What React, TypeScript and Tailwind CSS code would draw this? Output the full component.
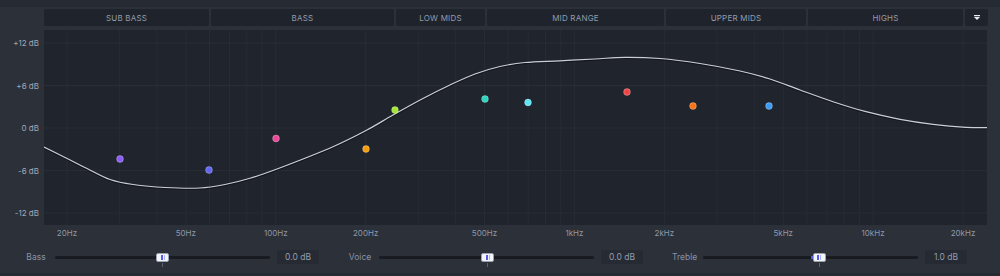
import type { ReactNode } from 'react';

const GX = 44;
const GY = 30;
const GW = 943;
const GH = 195;

const fx = (f: number) => 67 + Math.log10(f / 20) * 298.67 - GX;
const dy = (db: number) => 128 - db * 7.083 - GY;

const bands = [
  { label: 'SUB BASS', cls: 'w-[165px]' },
  { label: 'BASS', cls: 'w-[183px]' },
  { label: 'LOW MIDS', cls: 'w-[89px]' },
  { label: 'MID RANGE', cls: 'w-[177px]' },
  { label: 'UPPER MIDS', cls: 'w-[140px]' },
  { label: 'HIGHS', cls: 'w-[155px]' },
];

const gridFreqs = [
  20, 30, 40, 50, 60, 70, 80, 90, 100, 200, 300, 400, 500, 600, 700, 800, 900, 1000, 2000, 3000, 4000,
  5000, 6000, 7000, 8000, 9000, 10000, 20000,
];
const gridDb = [12, 6, 0, -6, -12];

const freqLabels: [string, number][] = [
  ['20Hz', 20],
  ['50Hz', 50],
  ['100Hz', 100],
  ['200Hz', 200],
  ['500Hz', 500],
  ['1kHz', 1000],
  ['2kHz', 2000],
  ['5kHz', 5000],
  ['10kHz', 10000],
  ['20kHz', 20000],
];

// absolute page coords traced from the response curve
const curve: [number, number][] = [
  [44, 147], [66, 158], [87, 168.5], [110, 179.5], [133, 184.5], [165, 187.5], [200, 188], [225, 184.5],
  [250, 178.3], [283, 166.7], [333, 146.7], [367, 130], [393, 115], [423, 98.5], [450, 85], [475, 74],
  [500, 66.5], [525, 62.5], [560, 60.8], [595, 59], [625, 57.3], [660, 58.5], [700, 63.5], [740, 71],
  [770, 79], [800, 90], [833, 101.7], [866, 111.7], [900, 119.3], [933, 124.3], [966, 127.3], [987, 127.7],
];

const dots: { x: number; y: number; c: string }[] = [
  { x: 120, y: 159, c: '#8b5cf6' },
  { x: 209, y: 170, c: '#6366f1' },
  { x: 276, y: 138.5, c: '#ec4899' },
  { x: 366, y: 149, c: '#f59e0b' },
  { x: 395, y: 110, c: '#a3e635' },
  { x: 485, y: 99, c: '#2dd4bf' },
  { x: 528, y: 102.5, c: '#5ee6f5' },
  { x: 627, y: 92, c: '#ef4444' },
  { x: 693, y: 106, c: '#f97316' },
  { x: 769, y: 106, c: '#3b9cf6' },
];

function smoothPath(pts: [number, number][]) {
  const p = pts.map(([x, y]) => [x - GX, y - GY]);
  let d = `M ${p[0][0]} ${p[0][1]}`;
  for (let i = 0; i < p.length - 1; i++) {
    const p0 = p[i - 1] ?? p[i];
    const p1 = p[i];
    const p2 = p[i + 1];
    const p3 = p[i + 2] ?? p2;
    const c1x = p1[0] + (p2[0] - p0[0]) / 6;
    const c1y = p1[1] + (p2[1] - p0[1]) / 6;
    const c2x = p2[0] - (p3[0] - p1[0]) / 6;
    const c2y = p2[1] - (p3[1] - p1[1]) / 6;
    d += ` C ${c1x.toFixed(2)} ${c1y.toFixed(2)} ${c2x.toFixed(2)} ${c2y.toFixed(2)} ${p2[0]} ${p2[1]}`;
  }
  return d;
}

function Graph() {
  const d = smoothPath(curve);
  return (
    <svg width={GW} height={GH} className="block bg-[#20242d]">
      {gridFreqs.map((f) => (
        <line key={f} x1={fx(f)} x2={fx(f)} y1={0} y2={GH} stroke="#272c35" strokeWidth={1} />
      ))}
      {gridDb.map((db) => (
        <line key={db} x1={0} x2={GW} y1={dy(db)} y2={dy(db)} stroke="#282d36" strokeWidth={1} />
      ))}
      <path d={d} fill="none" stroke="#0f1116" strokeWidth={1.6} transform="translate(0 1)" opacity={0.7} />
      <path d={d} fill="none" stroke="#c9ced8" strokeWidth={1.2} />
      {dots.map((p) => (
        <circle key={p.x} cx={p.x - GX} cy={p.y - GY} r={3.4} fill={p.c} stroke="rgba(255,255,255,0.35)" strokeWidth={0.8} />
      ))}
    </svg>
  );
}

function Slider({ label, pct, fill, value }: { label: string; pct: number; fill?: boolean; value: string }) {
  return (
    <div className="flex items-center">
      <span className="w-6 text-center text-[8.5px] text-[#8892a3]">{label}</span>
      <div className="relative ml-[7px] h-[3px] w-[215px] rounded-full bg-[#181b21]">
        {fill && (
          <div className="absolute top-0 h-[3px] bg-[#4f5ef0]" style={{ left: '50%', width: `${pct - 50}%` }} />
        )}
        <div className="absolute top-[-3px]" style={{ left: `${pct}%` }}>
          <div className="relative -ml-[6.5px] flex h-[9px] w-[13px] items-center justify-center gap-[1px] rounded-[2px] border border-[#9aa2b4] bg-[#f4f5f8]">
            <span className="h-[5px] w-[2px] bg-[#4f5ef0]" />
            <span className="h-[5px] w-[1px] bg-[#a7b0f5]" />
            <span className="absolute top-[9px] left-[5px] h-[4px] w-[1px] bg-[#5a6272]" />
          </div>
        </div>
      </div>
      <div className="ml-[7px] flex h-[14px] w-[42px] items-center justify-center rounded-[2px] bg-[#262a32] text-[8.5px] text-[#939cad]">
        {value}
      </div>
    </div>
  );
}

function Cell({ children, cls }: { children: ReactNode; cls: string }) {
  return (
    <div className={`flex h-[17px] items-center justify-center rounded-[2px] bg-[#1f232b] text-[8px] tracking-[0.2px] text-[#939cad] ${cls}`}>
      {children}
    </div>
  );
}

export default function App() {
  return (
    <div
      className="h-[276px] w-[1000px] overflow-hidden border-t-[7px] border-b-[3px] border-[#262a32] bg-[#2b3039]"
      style={{ fontFamily: 'Inter, "Noto Sans", sans-serif' }}
    >
      <div className="flex gap-[2px] pt-[2px] pl-[44px]">
        {bands.map((b) => (
          <Cell key={b.label} cls={b.cls}>
            {b.label}
          </Cell>
        ))}
        <Cell cls="w-[23px]">
          <svg width="6" height="5" viewBox="0 0 6 5">
            <rect x="0" y="0" width="6" height="1.2" fill="#e8ebf0" />
            <path d="M0 2 H6 L3 5 Z" fill="#e8ebf0" />
          </svg>
        </Cell>
      </div>

      <div className="mt-[4px] flex">
        <div className="flex w-[44px] flex-col pr-[5px] pt-[8px] text-right text-[8px] leading-[10px] text-[#a0a8b8]">
          <span>+12 dB</span>
          <span className="mt-[32.5px]">+6 dB</span>
          <span className="mt-[32.5px]">0 dB</span>
          <span className="mt-[32.5px]">-6 dB</span>
          <span className="mt-[32.5px]">-12 dB</span>
        </div>
        <Graph />
      </div>

      <div className="relative h-[16px] text-[8px] text-[#8f98a8]">
        {freqLabels.map(([t, f]) => (
          <span
            key={t}
            className="absolute top-[3px] -translate-x-1/2 leading-[10px]"
            style={{ left: fx(f) + GX }}
          >
            {t}
          </span>
        ))}
      </div>

      <div className="mt-[9px] flex gap-[29px] pl-[24px]">
        <Slider label="Bass" pct={50} value="0.0 dB" />
        <Slider label="Voice" pct={50.5} value="0.0 dB" />
        <Slider label="Treble" pct={54} fill value="1.0 dB" />
      </div>
    </div>
  );
}
